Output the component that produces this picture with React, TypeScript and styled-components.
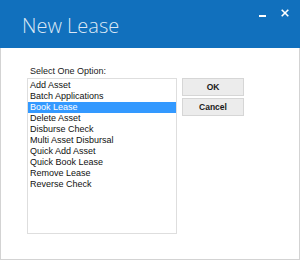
import styled, { createGlobalStyle } from "styled-components";

const GlobalStyle = createGlobalStyle`
  html, body {
    margin: 0;
    padding: 0;
    background: #ffffff;
  }
  body {
    font-family: "Liberation Sans", Arial, sans-serif;
  }
`

const Window = styled.div`
  width: 300px;
  height: 260px;
  display: flex;
  flex-direction: column;
  background: #ffffff;
  box-sizing: border-box;
`

const TitleBar = styled.div`
  height: 48px;
  background: #1170bd;
  display: flex;
  justify-content: space-between;
  align-items: flex-start;
  flex-shrink: 0;
`

const Title = styled.div`
  font-family: "Open Sans", "Segoe UI", sans-serif;
  font-weight: 300;
  font-size: 20px;
  line-height: 20px;
  color: #dce8f5;
  padding: 16px 0 0 22px;
`

const Controls = styled.div`
  display: flex;
  align-items: flex-start;
  gap: 14px;
  padding: 9px 11px 0 0;
`

const ControlIcon = styled.svg`
  display: block;
`

const Body = styled.div`
  flex: 1;
  border: 1px solid #d3d3d3;
  border-top: none;
  padding: 17px 0 0 26px;
  box-sizing: border-box;
`

const Label = styled.div`
  font-size: 9px;
  line-height: 12px;
  color: #1a1a1a;
  padding-left: 3px;
  margin-bottom: 1px;
`

const Content = styled.div`
  display: flex;
  align-items: flex-start;
  gap: 5px;
`

const ListBox = styled.ul`
  list-style: none;
  margin: 0;
  padding: 1px 0 0;
  width: 150px;
  height: 156px;
  box-sizing: border-box;
  border: 1px solid #dedede;
  background: #ffffff;
`

const Item = styled.li<{ $selected?: boolean }>`
  height: 11px;
  line-height: 11px;
  font-size: 9px;
  padding-left: 2px;
  white-space: nowrap;
  color: ${p => (p.$selected ? "#ffffff" : "#111111")};
  background: ${p => (p.$selected ? "#3399ff" : "transparent")};
`

const ButtonColumn = styled.div`
  display: flex;
  flex-direction: column;
  gap: 2px;
`

const Button = styled.button`
  width: 62px;
  height: 18px;
  padding: 0;
  margin: 0;
  border: 1px solid #d6d6d6;
  background: #ececec;
  font-family: "Liberation Sans", Arial, sans-serif;
  font-weight: bold;
  font-size: 8.5px;
  color: #1a1a1a;
  cursor: pointer;
`

const options = [
  "Add Asset",
  "Batch Applications",
  "Book Lease",
  "Delete Asset",
  "Disburse Check",
  "Multi Asset Disbursal",
  "Quick Add Asset",
  "Quick Book Lease",
  "Remove Lease",
  "Reverse Check",
]

export default function App() {
  return (
    <Window>
      <GlobalStyle />
      <TitleBar>
        <Title>New Lease</Title>
        <Controls>
          <ControlIcon width="8" height="9" viewBox="0 0 8 9">
            <rect x="0" y="6" width="7" height="2" fill="#ffffff" />
          </ControlIcon>
          <ControlIcon width="8" height="8" viewBox="0 0 8 8">
            <path d="M0.7 0.7 L7.3 7.3 M7.3 0.7 L0.7 7.3" stroke="#ffffff" strokeWidth="1.6" />
          </ControlIcon>
        </Controls>
      </TitleBar>
      <Body>
        <Label>Select One Option:</Label>
        <Content>
          <ListBox>
            {options.map(o => (
              <Item key={o} $selected={o === "Book Lease"}>{o}</Item>
            ))}
          </ListBox>
          <ButtonColumn>
            <Button>OK</Button>
            <Button>Cancel</Button>
          </ButtonColumn>
        </Content>
      </Body>
    </Window>
  )
}
